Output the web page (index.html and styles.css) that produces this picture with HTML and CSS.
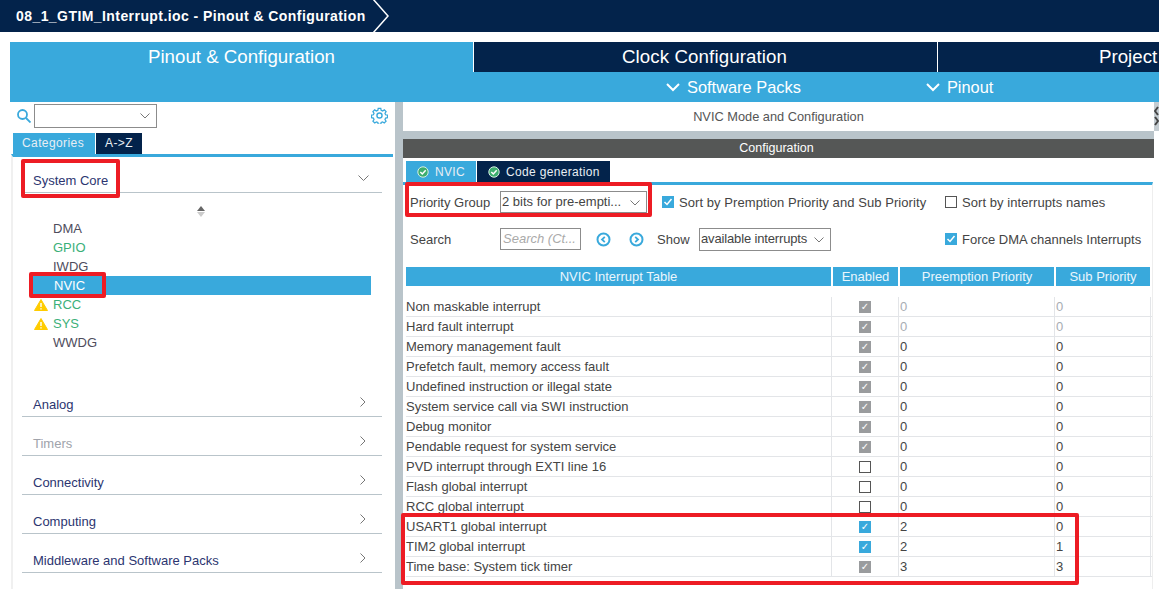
FILE: index.html
```html
<!doctype html>
<html>
  <head>
    <meta charset='utf-8'>
    <title>08_1_GTIM_Interrupt.ioc - Pinout &amp; Configuration</title>
    <link rel="stylesheet" href="styles.css">
  </head>
  <body>

    <div class='topbar'>
      <span class='crumb'>08_1_GTIM_Interrupt.ioc - Pinout &amp; Configuration</span>
      <svg class='crumb-arrow' width='20' height='32' viewBox='0 0 20 32'><path d='M2 -1 L17 16 L2 33' fill='none' stroke='#fff' stroke-width='1.5'/></svg>
    </div>

    <div class='maintabs'>
      <div class='maintab active'>Pinout &amp; Configuration</div>
      <div class='maintab clock'>Clock Configuration</div>
      <div class='maintab project'>Project</div>
    </div>

    <div class='subbar'>
      <div class='subitem packs'><svg width='14' height='9' viewBox='0 0 14 9'><path d='M1 1 L7 7 L13 1' fill='none' stroke='#fff' stroke-width='2'/></svg>Software Packs</div>
      <div class='subitem pinout'><svg width='14' height='9' viewBox='0 0 14 9'><path d='M1 1 L7 7 L13 1' fill='none' stroke='#fff' stroke-width='2'/></svg>Pinout</div>
    </div>

    <div class='workspace'>

      <div class='leftpanel'>
        <div class='searchrow'>
          <svg class='search-icon' width='14' height='14' viewBox='0 0 14 14'><circle cx='5.500' cy='5.500' r='4.500' fill='none' stroke='#39a9dc' stroke-width='1.800'/><path d='M9 9 L13.500 13.500' stroke='#39a9dc' stroke-width='1.800'/></svg>
          <div class='select searchselect'><svg class='chev' width='10' height='6' viewBox='0 0 10 6'><path d='M0.5 0.5 L5 5 L9.5 0.5' fill='none' stroke='#777'/></svg></div>
          <svg class='gear' width='17' height='17' viewBox='0 0 24 24'><path d='M10 1.5h4l.6 3 2.3 1 2.6-1.7 2.8 2.8-1.7 2.6 1 2.3 3 .6v4l-3 .6-1 2.3 1.7 2.6-2.8 2.8-2.6-1.7-2.3 1-.6 3h-4l-.6-3-2.3-1-2.6 1.7-2.8-2.8 1.7-2.6-1-2.3-3-.6v-4l3-.6 1-2.3L1.700 6.600l2.800-2.800 2.600 1.700 2.300-1z' transform='translate(1.200 .6) scale(.9)' fill='none' stroke='#39a9dc' stroke-width='2'/><circle cx='12' cy='12' r='3.600' fill='none' stroke='#39a9dc' stroke-width='2'/></svg>
        </div>

        <div class='lefttabs'>
          <div class='lefttab active'>Categories</div>
          <div class='lefttab'>A-&gt;Z</div>
        </div>

        <div class='categories'>
          <div class='cat open'>System Core
            <svg width='11' height='7' viewBox='0 0 11 7'><path d='M0.500 0.500 L5.500 5.500 L10.500 0.500' fill='none' stroke='#777'/></svg>
          </div>
          <div class='sorter'><i class='up'></i><i class='down'></i></div>
          <div class='items'>
            <div class='item'>DMA</div>
            <div class='item green'>GPIO</div>
            <div class='item'>IWDG</div>
            <div class='item selected'>NVIC</div>
            <div class='item green warn'>
              <svg width='14' height='12' viewBox='0 0 14 12'><path d='M7 0.500 L13.500 11.500 H0.500 Z' fill='#ffcc00' stroke='#ffcc00' stroke-linejoin='round'/><path d='M7 4 V8 M7 9.200 V10.500' stroke='#fff' stroke-width='1.400'/></svg>
              RCC</div>
            <div class='item green warn'>
              <svg width='14' height='12' viewBox='0 0 14 12'><path d='M7 0.500 L13.500 11.500 H0.500 Z' fill='#ffcc00' stroke='#ffcc00' stroke-linejoin='round'/><path d='M7 4 V8 M7 9.200 V10.500' stroke='#fff' stroke-width='1.400'/></svg>
              SYS</div>
            <div class='item'>WWDG</div>
          </div>
          <div class='cat first'>Analog<svg width='7' height='10' viewBox='0 0 7 10'><path d='M0.500 0.500 L5 5 L0.500 9.500' fill='none' stroke='#777'/></svg></div>
          <div class='cat muted'>Timers<svg width='7' height='10' viewBox='0 0 7 10'><path d='M0.500 0.500 L5 5 L0.500 9.500' fill='none' stroke='#777'/></svg></div>
          <div class='cat'>Connectivity<svg width='7' height='10' viewBox='0 0 7 10'><path d='M0.500 0.500 L5 5 L0.500 9.500' fill='none' stroke='#777'/></svg></div>
          <div class='cat'>Computing<svg width='7' height='10' viewBox='0 0 7 10'><path d='M0.500 0.500 L5 5 L0.500 9.500' fill='none' stroke='#777'/></svg></div>
          <div class='cat'>Middleware and Software Packs<svg width='7' height='10' viewBox='0 0 7 10'><path d='M0.500 0.500 L5 5 L0.500 9.500' fill='none' stroke='#777'/></svg></div>
        </div>
      </div>

      <div class='rightpanel'>
        <div class='modetitle'>NVIC Mode and Configuration</div>
        <svg class='scrollgrip' width='5' height='29' viewBox='0 0 5 29'><rect width='5' height='29' fill='#c4ccd1'/><path d='M4 5 L1 9 L4 13' fill='none' stroke='#444' stroke-width='2'/><path d='M1 15 L4 19 L1 23' fill='none' stroke='#444' stroke-width='2'/></svg>
        <div class='gapbar'></div>
        <div class='configbar'>Configuration</div>

        <div class='configtabs'>
          <div class='configtab active'><svg width='12' height='12' viewBox='0 0 12 12'><circle cx='6' cy='6' r='5.200' fill='#3dae6f' stroke='#d5eee2'/><path d='M3.300 6 L5.300 8 L8.700 4.300' fill='none' stroke='#fff' stroke-width='1.500'/></svg>NVIC</div>
          <div class='configtab'><svg width='12' height='12' viewBox='0 0 12 12'><circle cx='6' cy='6' r='5.200' fill='#3dae6f' stroke='#d5eee2'/><path d='M3.300 6 L5.300 8 L8.700 4.300' fill='none' stroke='#fff' stroke-width='1.500'/></svg>Code generation</div>
        </div>

        <div class='configbody'>
          <div class='ctlrow first'>
            <span class='label'>Priority Group</span>
            <div class='select prioselect'>2 bits for pre-empti...<svg class='chev' width='10' height='6' viewBox='0 0 10 6'><path d='M0.500 0.500 L5 5 L9.500 0.500' fill='none' stroke='#777'/></svg></div>
            <div class='check sort1'><span class='box on'><svg width='12' height='12' viewBox='0 0 12 12'><path d='M2.500 6 L5 8.500 L9.500 3' fill='none' stroke='#fff' stroke-width='1.500'/></svg></span>Sort by Premption Priority and Sub Priority</div>
            <div class='check sort2'><span class='box'></span>Sort by interrupts names</div>
          </div>

          <div class='ctlrow second'>
            <span class='label'>Search</span>
            <div class='searchinput'>Search (Ct...</div>
            <div class='arrows'>
              <svg width='15' height='15' viewBox='0 0 15 15'><circle cx='7.500' cy='7.500' r='6' fill='none' stroke='#39a9dc' stroke-width='2'/><path d='M8.800 4.800 L6 7.500 L8.800 10.200' fill='none' stroke='#39a9dc' stroke-width='1.800'/></svg>
              <svg width='15' height='15' viewBox='0 0 15 15'><circle cx='7.500' cy='7.500' r='6' fill='none' stroke='#39a9dc' stroke-width='2'/><path d='M6.200 4.800 L9 7.500 L6.200 10.200' fill='none' stroke='#39a9dc' stroke-width='1.800'/></svg>
            </div>
            <span class='showlabel'>Show</span>
            <div class='select showselect'>available interrupts<svg class='chev' width='10' height='6' viewBox='0 0 10 6'><path d='M0.500 0.500 L5 5 L9.500 0.500' fill='none' stroke='#777'/></svg></div>
            <div class='check force'><span class='box on'><svg width='12' height='12' viewBox='0 0 12 12'><path d='M2.500 6 L5 8.500 L9.500 3' fill='none' stroke='#fff' stroke-width='1.500'/></svg></span>Force DMA channels Interrupts</div>
          </div>

          <div class='thead'>
            <div>NVIC Interrupt Table</div>
            <div>Enabled</div>
            <div>Preemption Priority</div>
            <div>Sub Priority</div>
          </div>

          <div class='tbody'>
            <div class='row fixed'><div>Non maskable interrupt</div><div class='en'><span class='tick'>&#10003;</span></div><div class='val'>0</div><div class='val'>0</div></div>
            <div class='row fixed'><div>Hard fault interrupt</div><div class='en'><span class='tick'>&#10003;</span></div><div class='val'>0</div><div class='val'>0</div></div>
            <div class='row'><div>Memory management fault</div><div class='en'><span class='tick'>&#10003;</span></div><div class='val'>0</div><div class='val'>0</div></div>
            <div class='row'><div>Prefetch fault, memory access fault</div><div class='en'><span class='tick'>&#10003;</span></div><div class='val'>0</div><div class='val'>0</div></div>
            <div class='row'><div>Undefined instruction or illegal state</div><div class='en'><span class='tick'>&#10003;</span></div><div class='val'>0</div><div class='val'>0</div></div>
            <div class='row'><div>System service call via SWI instruction</div><div class='en'><span class='tick'>&#10003;</span></div><div class='val'>0</div><div class='val'>0</div></div>
            <div class='row'><div>Debug monitor</div><div class='en'><span class='tick'>&#10003;</span></div><div class='val'>0</div><div class='val'>0</div></div>
            <div class='row'><div>Pendable request for system service</div><div class='en'><span class='tick'>&#10003;</span></div><div class='val'>0</div><div class='val'>0</div></div>
            <div class='row'><div>PVD interrupt through EXTI line 16</div><div class='en'><span class='tick off'></span></div><div class='val'>0</div><div class='val'>0</div></div>
            <div class='row'><div>Flash global interrupt</div><div class='en'><span class='tick off'></span></div><div class='val'>0</div><div class='val'>0</div></div>
            <div class='row'><div>RCC global interrupt</div><div class='en'><span class='tick off'></span></div><div class='val'>0</div><div class='val'>0</div></div>
            <div class='row'><div>USART1 global interrupt</div><div class='en'><span class='tick blue'>&#10003;</span></div><div class='val'>2</div><div class='val'>0</div></div>
            <div class='row'><div>TIM2 global interrupt</div><div class='en'><span class='tick blue'>&#10003;</span></div><div class='val'>2</div><div class='val'>1</div></div>
            <div class='row'><div>Time base: System tick timer</div><div class='en'><span class='tick'>&#10003;</span></div><div class='val'>3</div><div class='val'>3</div></div>
          </div>
        </div>
      </div>
    </div>

    <!-- red annotations drawn on top of the screenshot -->
    <div class='mark mark-core'></div>
    <div class='mark mark-nvic'></div>
    <div class='mark mark-prio'></div>
    <div class='mark mark-rows'></div>

  </body>
</html>
```

FILE: styles.css
```css
* {
  box-sizing: border-box;
}

html, body {
  height: 589px;
  overflow: hidden;
}

body {
  margin: 0;
  background: #fff;
  font-family: 'Liberation Sans', Arial, sans-serif;
  font-size: 13px;
  color: #444;
}

/* top breadcrumb */
.topbar {
  height: 32px;
  background: #03234b;
  display: flex;
  align-items: center;
  padding-left: 16px;
}

.crumb {
  color: #fff;
  font-size: 14px;
  font-weight: bold;
  letter-spacing: 0.43px;
}

.crumb-arrow {
  margin-left: 5px;
}

/* main tabs */
.maintabs {
  margin: 10px 0 0 10px;
  height: 30px;
  display: grid;
  grid-template-columns: 463px 464px 1fr;
  overflow: hidden;
}

.maintab {
  background: #03234b;
  color: #fff;
  font-size: 18.7px;
  line-height: 30px;
  text-align: center;
  white-space: nowrap;
  border-left: 1px solid #fff;
}

.maintab.active {
  background: #39a9dc;
  border-left: 0;
}

.maintab.clock {
  padding-right: 2px;
  letter-spacing: 0.1px;
}

.maintab.project {
  text-align: left;
  padding-left: 161px;
}

.subbar {
  margin-left: 10px;
  height: 30px;
  padding: 1px 0 0 656px;
  background: #39a9dc;
  display: flex;
  align-items: center;
  color: #fff;
  font-size: 16.4px;
}

.subitem {
  display: flex;
  align-items: center;
  gap: 7px;
}

.subitem.pinout {
  margin-left: 125px;
}

/* panels */
.workspace {
  margin-left: 10px;
  height: 487px;
  display: grid;
  grid-template-columns: 385px 1fr;
}

.searchrow {
  height: 27px;
  padding: 0 7px;
  display: flex;
  align-items: center;
}

.search-icon {
  margin-right: 3px;
}

.select {
  position: relative;
  border: 1px solid #8c8c8c;
  background: #fff;
  white-space: nowrap;
}

.chev {
  position: absolute;
  right: 6px;
  top: 8px;
}

.searchselect {
  width: 123px;
  height: 24px;
}

.gear {
  margin-left: auto;
}

.lefttabs {
  display: flex;
  gap: 1px;
  margin-top: 4px;
  padding-left: 3px;
}

.lefttab {
  height: 21px;
  line-height: 21px;
  padding: 0 9px;
  background: #03234b;
  color: #e8eef4;
  font-size: 12px;
  letter-spacing: 0.4px;
}

.lefttab.active {
  width: 82px;
  background: #39a9dc;
}

.categories {
  height: 435px;
  width: 382px;
  margin-left: 1px;
  padding-left: 9px;
  border-top: 3px solid #39a9dc;
  border-left: 2px solid #f0f0f0;
}

.cat {
  width: 360px;
  height: 39px;
  padding: 0 15px 4px 11px;
  display: flex;
  align-items: flex-end;
  justify-content: space-between;
  border-bottom: 1px solid #b9c4ca;
  color: #2c3570;
}

.cat svg {
  margin-bottom: 5px;
}

.cat.open {
  height: 36px;
}

.cat.open svg {
  margin-bottom: 6px;
  margin-right: -2px;
}

.cat.muted {
  color: #a0a3ab;
}

.cat.first {
  margin-top: 25px;
}

.sorter {
  width: 360px;
  height: 26px;
  padding: 13px 0 0 175px;
}

.sorter i {
  display: block;
  width: 0;
  border-left: 4px solid transparent;
  border-right: 4px solid transparent;
}

.sorter .up {
  border-bottom: 5px solid #666;
  margin-bottom: 1px;
}

.sorter .down {
  border-top: 5px solid #ccc;
}

.items {
  height: 134px;
  margin-left: 11px;
}

.item {
  position: relative;
  width: 338px;
  height: 19px;
  line-height: 19px;
  padding-left: 20px;
  color: #4e4c5c;
}

.item.green {
  color: #3bb079;
}

.item.selected {
  background: #39a9dc;
  color: #fff;
  padding-left: 21px;
}

.item.warn svg {
  position: absolute;
  left: 1px;
  top: 4px;
}

/* right side */
.rightpanel {
  position: relative;
  border-left: 8px solid #b9c4ca;
  padding-right: 5px;
}

.modetitle {
  height: 29px;
  line-height: 29px;
  text-align: center;
  font-size: 12.8px;
  color: #555;
}

.scrollgrip {
  position: absolute;
  right: 0;
  top: 0;
}

.gapbar {
  height: 8px;
  background: #b9c4ca;
}

.configbar {
  height: 19px;
  line-height: 19px;
  padding-right: 4px;
  background: #555756;
  color: #fff;
  font-size: 12.5px;
  text-align: center;
}

.configtabs {
  display: flex;
  gap: 1px;
  margin-top: 3px;
  padding-left: 3px;
}

.configtab {
  height: 21px;
  padding: 0 10px 0 11px;
  display: flex;
  align-items: center;
  gap: 6px;
  background: #03234b;
  color: #e8eef4;
  font-size: 12px;
  letter-spacing: 0.33px;
}

.configtab.active {
  width: 70px;
  background: #39a9dc;
}

.configbody {
  height: 407px;
  margin-right: 1px;
  border-top: 3px solid #39a9dc;
  border-right: 1px solid #eee;
}

.ctlrow {
  padding-left: 7px;
  display: flex;
  align-items: center;
  white-space: nowrap;
}

.ctlrow.first {
  height: 34px;
}

.ctlrow.second {
  height: 40px;
}

.label {
  width: 90px;
}

.ctlrow .select {
  height: 22px;
  line-height: 20px;
  padding-left: 1px;
}

.prioselect {
  width: 147px;
  margin-right: 15px;
}

.check {
  display: flex;
  align-items: center;
  gap: 5px;
}

.check.sort1 {
  width: 283px;
  letter-spacing: 0.07px;
}

.check.sort2 {
  letter-spacing: 0.07px;
}

.check.force {
  margin-left: 114px;
}

.box {
  width: 12px;
  height: 12px;
  border: 1px solid #555;
  background: #fff;
}

.box.on {
  border: 0;
  background: #39a9dc;
}

.box svg {
  display: block;
}

.searchinput {
  width: 81px;
  height: 22px;
  line-height: 20px;
  padding-left: 2px;
  border: 1px solid #8c8c8c;
  color: #aaa;
  font-style: italic;
  overflow: hidden;
}

.arrows {
  display: flex;
  gap: 18px;
  margin-left: 15px;
}

.showlabel {
  width: 42px;
  margin-left: 13px;
}

.ctlrow .showselect {
  width: 132px;
  height: 23px;
  letter-spacing: -0.15px;
}

/* interrupt table */
.thead {
  margin: 8px 0 0 3px;
  display: grid;
  grid-template-columns: 425px 65px 154px 94px;
  gap: 2px;
}

.thead div {
  height: 19px;
  line-height: 19px;
  background: #39a9dc;
  color: #eaf6fc;
  text-align: center;
  white-space: nowrap;
}

.tbody {
  margin: 11px 0 0 3px;
}

.row {
  height: 20px;
  display: grid;
  grid-template-columns: 426px 67px 156px 96px;
  border-bottom: 1px solid #e3e5e8;
  line-height: 19px;
  white-space: nowrap;
}

.row > div {
  border-right: 1px solid #e3e5e8;
}

.row .val {
  padding-left: 1px;
  color: #444;
}

.row.fixed .val {
  color: #a8adb3;
}

.row .en {
  display: flex;
  justify-content: center;
  align-items: center;
}

.tick {
  width: 12px;
  height: 12px;
  background: #9a9c9e;
  color: #fff;
  font-size: 10px;
  line-height: 12px;
  text-align: center;
  font-family: 'DejaVu Sans', sans-serif;
}

.tick.blue {
  background: #39a9dc;
}

.tick.off {
  background: #fff;
  border: 1px solid #555;
}

/* annotations */
.mark {
  position: absolute;
  border: 4px solid #ed1c24;
  border-radius: 2px;
}

.mark-core {
  left: 21px;
  top: 159px;
  width: 99px;
  height: 39px;
}

.mark-nvic {
  left: 29px;
  top: 272px;
  width: 77px;
  height: 26px;
}

.mark-prio {
  left: 405px;
  top: 182px;
  width: 247px;
  height: 35px;
}

.mark-rows {
  left: 401px;
  top: 513px;
  width: 678px;
  height: 72px;
}
```
